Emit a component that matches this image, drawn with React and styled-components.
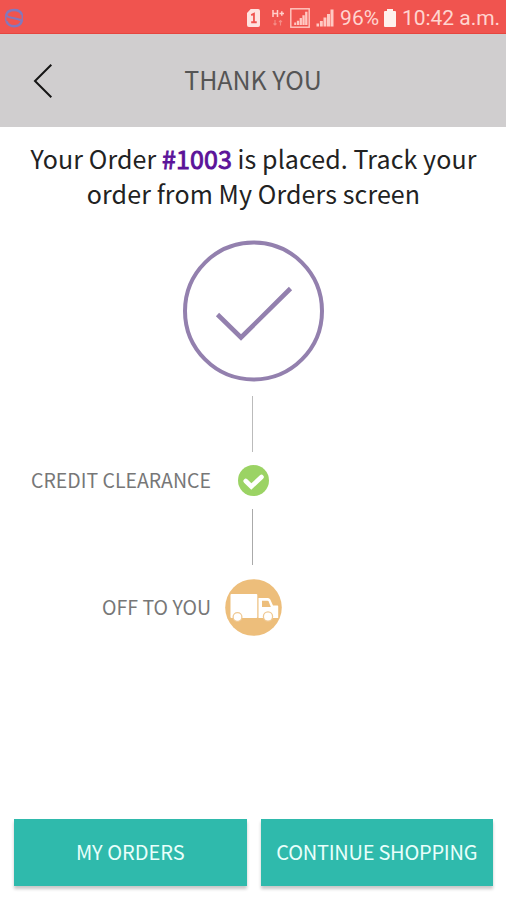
import styled, { createGlobalStyle, ThemeProvider } from 'styled-components';

const theme = {
  red: '#f0544f',
  grey: '#d0cecf',
  teal: '#2fbaac',
  purple: '#5b1299',
  lilac: '#9380ae',
  green: '#9bd364',
  orange: '#edbe7b',
};

function SyncIcon() {
  return (
    <svg width="20" height="20" viewBox="0 0 20 20" fill="none" stroke="#8278bd" strokeWidth="2.4">
      <path d="M2 7.500C3 3.300 6 2 10 2s7 1.600 8 5M18 12.500c-1 4-4 5.700-8 5.700s-6.500-2-7.600-5" />
      <path d="M2 7c2 3 5 2.400 8 3.200s6 .6 8 3" strokeWidth="2" />
      <path d="M1.800 7v6M18.200 7v6" strokeWidth="1.400" />
    </svg>
  );
}

function SimIcon() {
  return (
    <svg width="13" height="18" viewBox="0 0 14 18" preserveAspectRatio="none">
      <path d="M4 0h8a2 2 0 0 1 2 2v14a2 2 0 0 1-2 2H2a2 2 0 0 1-2-2V4z" fill="#ffe3df" />
      <path d="M4.500 6.200L7.500 4.800v8.700M4.500 13.200h6" fill="none" stroke="#f0544f" strokeWidth="1.900" />
    </svg>
  );
}

function DataIcon() {
  return (
    <svg width="18" height="18" viewBox="-6 0 18 18" fill="none" stroke="#ffd0ca" strokeWidth="1.500">
      <path d="M1 1v7M5.500 1v7M1 4.500h4.500M7.500 4.500H12M9.800 2.200v4.600" />
      <path d="M3 11v5M1.500 14.500L3 16l1.500-1.500M8.500 16.500v-5M7 13l1.500-1.500L10 13" stroke="#f58c86" strokeWidth="1.100" />
    </svg>
  );
}

function SignalIcon({ framed }) {
  return (
    <svg width={framed ? 20 : 18} height="20" viewBox={framed ? '0 0 20 20' : '0 0 18 20'}>
      {framed && <rect x=".8" y=".8" width="18.400" height="18.400" fill="none" stroke="#ffc9c3" strokeWidth="1.400" />}
      <g fill="#ffc9c3" transform={framed ? 'translate(4.200 3.700) scale(.78)' : 'translate(.5 1.500)'}>
        <path d="M0 14h2.500v3H0zM3.400 11.500h2.900V17H3.400zM7 8h2.900v9H7zM10.500 4.500h3V17h-3zM14 0h3v17h-3z" />
      </g>
    </svg>
  );
}

function BatteryIcon() {
  return (
    <svg width="12" height="18" viewBox="0 0 12 18" fill="#fff0ed">
      <path d="M3 0h6v2h2a1 1 0 0 1 1 1v14a1 1 0 0 1-1 1H1a1 1 0 0 1-1-1V3a1 1 0 0 1 1-1h2z" />
    </svg>
  );
}

function TruckIcon() {
  return (
    <svg width="57" height="57" viewBox="0 0 57 57">
      <circle cx="28.500" cy="28.500" r="28.300" fill={theme.orange} />
      <g fill="#fff">
        <rect x="5.500" y="15" width="26.800" height="24" rx="1" />
        <path d="M33.500 19H43q1.500 0 2.300 1.500l2.700 6h4.500q.7 0 .7.700V39H33.500z" />
      </g>
      <path d="M37 21.800h5.500q.8 0 1.200.8L45.800 28H37z" fill={theme.orange} />
      <g fill="#fff" stroke="#f0c993" strokeWidth="1.300">
        <circle cx="12.500" cy="38" r="4.400" />
        <circle cx="43" cy="37.500" r="4.600" />
      </g>
    </svg>
  );
}

function App() {
  return (
    <ThemeProvider theme={theme}>
      <GlobalStyle />
      <Screen>
        <StatusBar>
          <SyncIcon />
          <StatusGroup>
            <SimIcon />
            <DataIcon />
            <SignalIcon framed />
            <SignalIcon />
            <Battery>
              96%
              <BatteryIcon />
            </Battery>
            <Clock>10:42 a.m.</Clock>
          </StatusGroup>
        </StatusBar>

        <Header>
          <BackButton aria-label="Back">
            <svg width="20" height="36" viewBox="0 0 20 36" fill="none" stroke="#151515" strokeWidth="2">
              <path d="M18.300 1.700L2 18l16.300 16.300" />
            </svg>
          </BackButton>
          <Title>THANK YOU</Title>
        </Header>

        <Message>
          Your Order <OrderNumber>#1003</OrderNumber> is placed. Track your
          <br />
          order from My Orders screen
        </Message>

        <Timeline>
          <Step $height={142}>
            <StepIcon>
              <svg width="141" height="142" viewBox="0 0 141 142" fill="none" stroke={theme.lilac} strokeWidth="4">
                <circle cx="70.500" cy="71" r="68.500" />
                <path d="M34.500 74.500L58 97.500l49.500-49" strokeWidth="4.600" />
              </svg>
            </StepIcon>
          </Step>
          <Connector />
          <Step $height={57}>
            <StepLabel>CREDIT CLEARANCE</StepLabel>
            <StepIcon>
              <svg width="31" height="31" viewBox="0 0 31 31" fill="none">
                <circle cx="15.500" cy="15.500" r="15.500" fill={theme.green} />
                <path d="M7.700 16l5.600 5.500L23.500 12" stroke="#fff" strokeWidth="4.600" strokeLinecap="round" />
              </svg>
            </StepIcon>
          </Step>
          <Connector $dark />
          <Step $height={85}>
            <StepLabel>OFF TO YOU</StepLabel>
            <StepIcon>
              <TruckIcon />
            </StepIcon>
          </Step>
        </Timeline>

        <Footer>
          <Button>MY ORDERS</Button>
          <Button $spacing="-0.25px">CONTINUE SHOPPING</Button>
        </Footer>
      </Screen>
    </ThemeProvider>
  );
}

const GlobalStyle = createGlobalStyle`
  * {
    box-sizing: border-box;
  }

  body {
    margin: 0;
    background: white;
    font-family: 'Noto Sans CJK SC', 'Open Sans', sans-serif;
  }

  svg {
    display: block;
    flex-shrink: 0;
  }
`;

const Screen = styled.div`
  display: flex;
  flex-direction: column;
  width: 506px;
  height: 900px;
  overflow: hidden;
`;

const StatusBar = styled.div`
  display: flex;
  align-items: center;
  justify-content: space-between;
  height: 34px;
  padding: 2px 6px 0 4px;
  background: ${({ theme }) => theme.red};
  border-bottom: 1px solid #e5463f;
`;

const StatusGroup = styled.div`
  display: flex;
  align-items: center;
  gap: 6px;
  color: #ffd5d0;
  font-family: Roboto, sans-serif;
  font-size: 21px;
  line-height: 34px;
  white-space: nowrap;
`;

const Battery = styled.div`
  display: flex;
  align-items: center;
  gap: 5px;
`;

const Clock = styled.span`
  letter-spacing: -0.05px;
`;

const Header = styled.header`
  display: grid;
  grid-template-columns: 86px 1fr 86px;
  align-items: center;
  height: 93px;
  background: ${({ theme }) => theme.grey};
`;

const BackButton = styled.button`
  justify-self: end;
  margin-right: 33px;
  padding: 0;
  border: 0;
  background: none;
`;

const Title = styled.h1`
  margin: 0;
  padding-bottom: 3px;
  color: #555;
  font-size: 25px;
  font-weight: 400;
  line-height: 36px;
  text-align: center;
`;

const Message = styled.p`
  margin: 14px 0 0;
  padding-left: 1px;
  color: #222;
  font-size: 25px;
  line-height: 35px;
  letter-spacing: 0.1px;
  text-align: center;
  white-space: nowrap;
`;

const OrderNumber = styled.strong`
  color: ${({ theme }) => theme.purple};
  font-weight: 400;
  -webkit-text-stroke: 0.9px;
`;

const Timeline = styled.div`
  display: flex;
  flex-direction: column;
  padding-top: 29px;
`;

const Step = styled.div`
  display: grid;
  grid-template-columns: 211px 85px 210px;
  align-items: center;
  height: ${({ $height }) => $height}px;
`;

const StepLabel = styled.span`
  padding-bottom: 1px;
  color: #777;
  font-size: 19.5px;
  line-height: 28px;
  text-align: right;
  white-space: nowrap;
`;

const StepIcon = styled.div`
  display: flex;
  grid-column: 2;
  justify-content: center;
  padding-bottom: 1px;
`;

const Connector = styled.div`
  width: 1px;
  height: 56px;
  margin-left: 252px;
  background: ${({ $dark }) => ($dark ? '#aaa' : '#bbb')};

  ${Step}:first-child + & {
    margin-top: 14px;
  }
`;

const Footer = styled.footer`
  display: grid;
  grid-template-columns: 1fr 1fr;
  gap: 14px;
  margin-top: auto;
  padding: 0 13px 14px 14px;
`;

const Button = styled.button`
  height: 67px;
  padding: 0 0 3px;
  border: 0;
  background: ${({ theme }) => theme.teal};
  box-shadow: 0 3px 3px rgba(0, 0, 0, 0.22);
  color: #e9fffb;
  font-family: inherit;
  font-size: 20px;
  letter-spacing: ${({ $spacing }) => $spacing || 0};
  white-space: nowrap;
`;

export default App;
